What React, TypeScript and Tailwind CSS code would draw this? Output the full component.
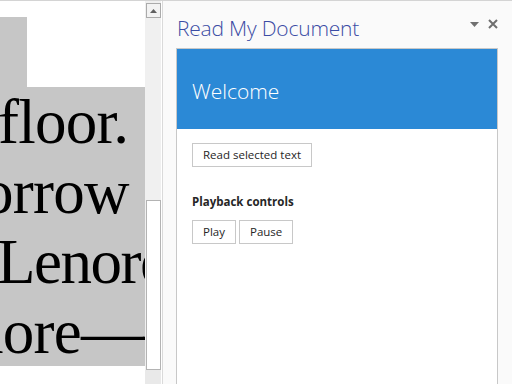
import React from 'react';

const serif = { fontFamily: '"Liberation Serif", "Times New Roman", serif' };

function DocumentView() {
  return (
    <div className="relative w-[145px] h-full overflow-hidden bg-white" style={serif}>
      <div className="pt-[16px] text-[63px] leading-[70px] tracking-[-0.75px] text-black whitespace-nowrap">
        <div className="h-[70px] w-[27px] bg-[#c6c6c6]" />
        <div className="h-[70px] bg-[#c6c6c6] -ml-[2px]">floor.</div>
        <div className="h-[70px] bg-[#c6c6c6] -ml-[18px]">orrow</div>
        <div className="h-[70px] bg-[#c6c6c6] -ml-[3px] tracking-[-1.5px]">Lenore</div>
        <div className="h-[69px] bg-[#c6c6c6] -ml-[28px]">nore——————</div>
      </div>
    </div>
  );
}

function Scrollbar() {
  return (
    <div className="w-[16px] h-full bg-[#f0f0f0] flex flex-col">
      <div className="mt-[2px] ml-[1px] w-[15px] h-[15px] border border-[#ababab] bg-[#f3f3f3] flex items-center justify-center">
        <svg width="7" height="4" viewBox="0 0 7 4">
          <path d="M0 4 L3.5 0 L7 4 Z" fill="#606060" />
        </svg>
      </div>
      <div className="mt-[182px] ml-[1px] w-[15px] h-[170px] border border-[#b3b3b3] bg-white" />
      <div className="flex-1 bg-[#e9e9e9]" />
    </div>
  );
}

function PaneButton({ children }: { children: React.ReactNode }) {
  return (
    <button className="h-[24px] px-[10px] border border-[#c8c8c8] bg-white text-[11.5px] text-[#262626] leading-none">
      {children}
    </button>
  );
}

function TaskPane() {
  return (
    <div className="flex-1 h-full bg-[#fafafa] flex flex-col pl-[13px] pr-[14px]" style={{ fontFamily: '"Open Sans", "Noto Sans", sans-serif' }}>
      <div className="h-[47px] flex items-start justify-between pl-[1px]">
        <h1 className="mt-[13px] text-[21px] font-light leading-[28px] text-[#3b4ca4] tracking-[-0.2px]">Read My Document</h1>
        <div className="flex items-center gap-[9px] mt-[18px]">
          <svg width="9" height="5" viewBox="0 0 9 5">
            <path d="M0 0 L9 0 L4.5 5 Z" fill="#707070" />
          </svg>
          <svg width="10" height="10" viewBox="0 0 10 10">
            <path d="M1 1 L9 9 M9 1 L1 9" stroke="#6e6e6e" strokeWidth="2" />
          </svg>
        </div>
      </div>
      <div className="flex-1 border border-b-0 border-[#c8c8c8] bg-white flex flex-col">
        <div className="h-[80px] bg-[#2b89d6] pl-[15px] pt-[27px]">
          <h2 className="text-[21px] font-light leading-[30px] text-white">Welcome</h2>
        </div>
        <div className="pl-[15px] pt-[14px] flex flex-col items-start">
          <PaneButton>Read selected text</PaneButton>
          <h3 className="mt-[27px] text-[11.5px] font-bold leading-[16px] text-[#262626]">Playback controls</h3>
          <div className="mt-[10px] flex gap-[3px]">
            <PaneButton>Play</PaneButton>
            <PaneButton>Pause</PaneButton>
          </div>
        </div>
      </div>
    </div>
  );
}

export default function App() {
  return (
    <div className="w-[512px] h-[384px] overflow-hidden bg-white border-t border-[#d4d4d4] flex">
      <DocumentView />
      <Scrollbar />
      <div className="w-[1px] h-full bg-white" />
      <div className="w-[1px] h-full bg-[#dadada]" />
      <TaskPane />
    </div>
  );
}
